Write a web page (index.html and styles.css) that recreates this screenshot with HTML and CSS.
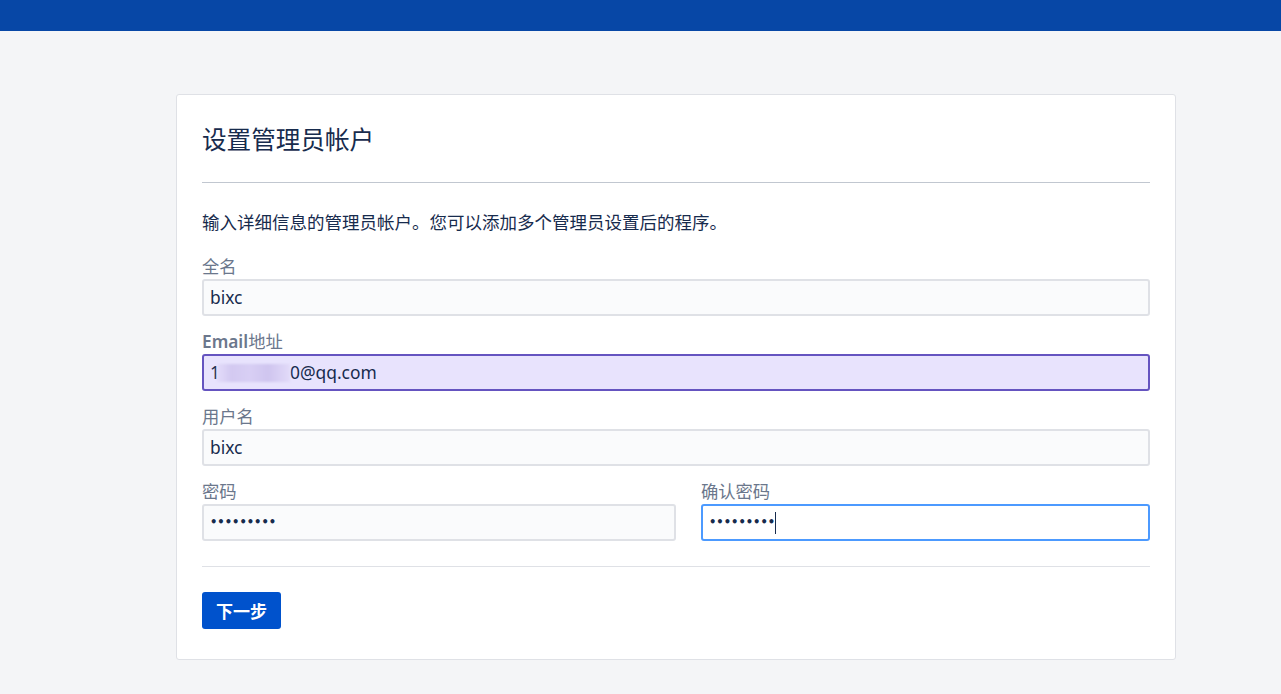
FILE: index.html
```html
<!DOCTYPE html>
<html lang="zh-CN">
<head>
<meta charset="utf-8">
<title>设置管理员帐户</title>
<link rel="stylesheet" href="styles.css">
</head>
<body>
<header class="topbar"></header>
<main class="page">
  <section class="card">
    <h1 class="title">设置管理员帐户</h1>
    <hr class="rule">
    <p class="desc">输入详细信息的管理员帐户。您可以添加多个管理员设置后的程序。</p>
    <div class="field">
      <label class="label">全名</label>
      <div class="input">bixc</div>
    </div>
    <div class="field">
      <label class="label"><b class="strong">Email</b>地址</label>
      <div class="input input-auto">1<span class="blur"></span>0@qq.com</div>
    </div>
    <div class="field">
      <label class="label">用户名</label>
      <div class="input">bixc</div>
    </div>
    <div class="row">
      <div class="field">
        <label class="label">密码</label>
        <div class="input"><span class="dots">•••••••••</span></div>
      </div>
      <div class="field">
        <label class="label">确认密码</label>
        <div class="input input-focus"><span class="dots">•••••••••</span><span class="caret"></span></div>
      </div>
    </div>
    <hr class="rule rule-light">
    <button class="btn">下一步</button>
  </section>
</main>
</body>
</html>
```
FILE: styles.css
```css
html, body {
  margin: 0;
  padding: 0;
}
body {
  background: #f4f5f7;
  font-family: "Noto Sans", "Noto Sans CJK SC", sans-serif;
  color: #172b4d;
  height: 694px;
  overflow: hidden;
}
.topbar {
  height: 31px;
  background: #0747a6;
}
.page {
  padding-top: 63px;
  padding-left: 176px;
}
.card {
  box-sizing: border-box;
  width: 1000px;
  height: 566px;
  background: #fff;
  border: 1px solid #dfe1e6;
  border-radius: 3px;
  padding: 30px 25px 30px 25px;
}
.title {
  margin: 0;
  font-size: 24.6px;
  font-weight: 400;
  line-height: 30px;
  color: #172b4d;
}
.rule {
  border: 0;
  height: 1px;
  background: #c1c7d0;
  margin: 27px 0 27px 0;
}
.rule-light {
  background: #dfe1e6;
  margin: 25px 0 25px 0;
}
.desc {
  margin: 0 0 21px 0;
  font-size: 17.5px;
  line-height: 24px;
  color: #172b4d;
}
.field {
  display: flex;
  flex-direction: column;
  margin-bottom: 14px;
}
.row .field {
  margin-bottom: 0;
}
.label {
  font-size: 17.3px;
  line-height: 24px;
  color: #6b778c;
}
.strong {
  font-weight: 600;
}
.input {
  box-sizing: border-box;
  height: 37px;
  border: 2px solid #dfe1e6;
  border-radius: 3px;
  background: #fafbfc;
  padding: 0 6px;
  font-size: 17.4px;
  line-height: 33px;
  color: #172b4d;
  display: flex;
  align-items: center;
  white-space: nowrap;
}
.input-auto {
  background: #e8e3fd;
  border-color: #6554c0;
}
.input-focus {
  background: #fff;
  border-color: #4c9aff;
}
.blur {
  display: inline-block;
  width: 73px;
  height: 18px;
  margin-left: -3px;
  background: linear-gradient(90deg, #e3dcfa 0%, #d3c9f1 20%, #d8cff4 45%, #cfc5ef 70%, #e2dbf9 100%);
  filter: blur(1px);
}
.dots {
  font-size: 11.5px;
  font-weight: 700;
  letter-spacing: 0;
  font-family: "DejaVu Sans", sans-serif;
}
.caret {
  display: inline-block;
  width: 1px;
  height: 22px;
  background: #172b4d;
}
.row {
  display: grid;
  grid-template-columns: 474px 1fr;
  column-gap: 25px;
}
.btn {
  height: 37px;
  padding: 0 14px;
  border: 0;
  border-radius: 3px;
  background: #0052cc;
  color: #fff;
  font-family: "Noto Sans", "Noto Sans CJK SC", sans-serif;
  font-size: 17px;
  font-weight: 700;
  cursor: pointer;
}
```
